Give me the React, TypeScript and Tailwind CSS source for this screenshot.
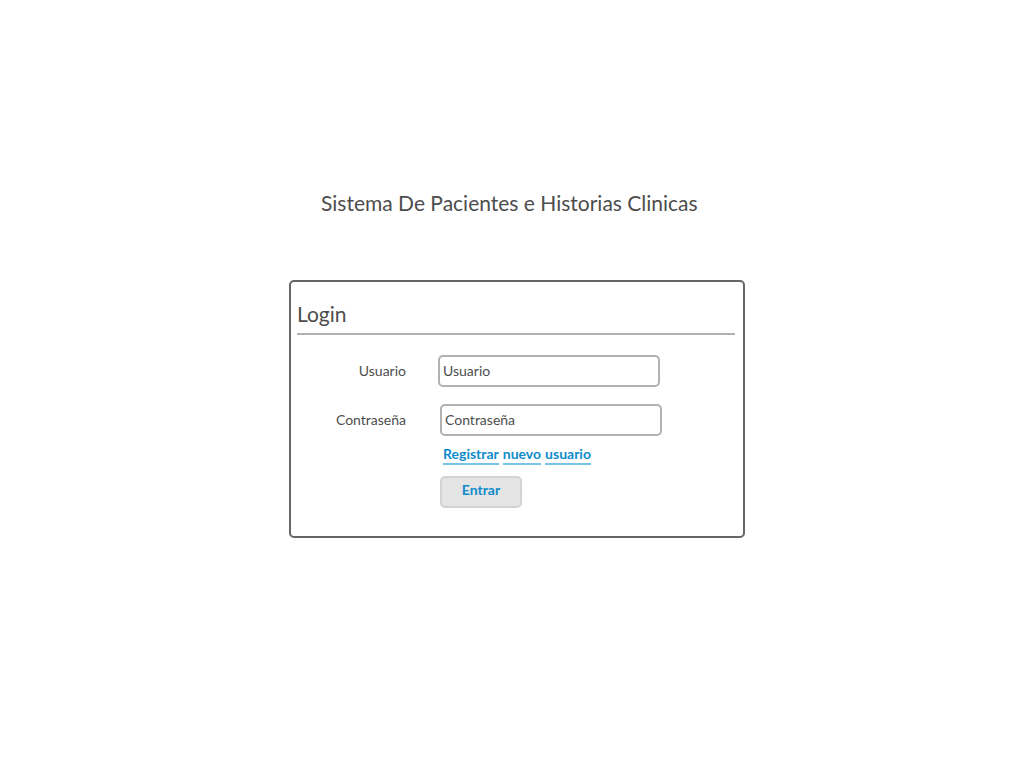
export default function App() {
  const linkWords = ["Registrar", "nuevo", "usuario"];

  return (
    <main className="flex min-h-screen justify-center bg-white pt-[187px] pb-8 pl-[10px] font-['Lato','Liberation_Sans',sans-serif] text-[#4d4d4d]">
      <div className="w-full max-w-[456px]">
        <h1 className="pl-8 text-[21px] leading-8">Sistema De Pacientes e Historias Clinicas</h1>

        <section className="mt-[61px] rounded-[5px] border-2 border-[#666668] pt-[18px] pr-2 pb-7 pl-[6px]">
          <h2 className="border-b-2 border-[#b1b1b1] pb-[5px] text-[21px] leading-7">Login</h2>

          <form className="pt-5" onSubmit={(event) => event.preventDefault()}>
            <div className="flex items-center gap-8">
              <label htmlFor="usuario" className="w-[109px] text-right text-sm">
                Usuario
              </label>
              <input
                id="usuario"
                type="text"
                placeholder="Usuario"
                className="h-8 w-[222px] rounded-[5px] border-2 border-[#b1b1b1] px-[3px] pb-[2px] text-sm outline-none placeholder:text-[#4d4d4d] focus:border-[#666668]"
              />
            </div>

            <div className="mt-[17px] flex items-center gap-[34px]">
              <label htmlFor="contrasena" className="w-[109px] text-right text-sm">
                Contraseña
              </label>
              <input
                id="contrasena"
                type="password"
                placeholder="Contraseña"
                className="h-8 w-[222px] rounded-[5px] border-2 border-[#b1b1b1] px-[3px] pb-[2px] text-sm outline-none placeholder:text-[#4d4d4d] focus:border-[#666668]"
              />
            </div>

            <div className="flex flex-col items-start pt-[9px] pl-[143px]">
              <a href="#registro" className="ml-[3px] flex gap-1 text-sm leading-[18px] font-bold text-[#0f8ccb]">
                {linkWords.map((word) => (
                  <span key={word} className="border-b-2 border-[#78c3e8]">
                    {word}
                  </span>
                ))}
              </a>
              <button
                type="submit"
                className="mt-[11px] h-8 w-[82px] rounded-[5px] border-2 border-[#d3d3d3] bg-[#e4e4e4] pb-1 text-sm font-bold text-[#0f8ccb]"
              >
                Entrar
              </button>
            </div>
          </form>
        </section>
      </div>
    </main>
  );
}
